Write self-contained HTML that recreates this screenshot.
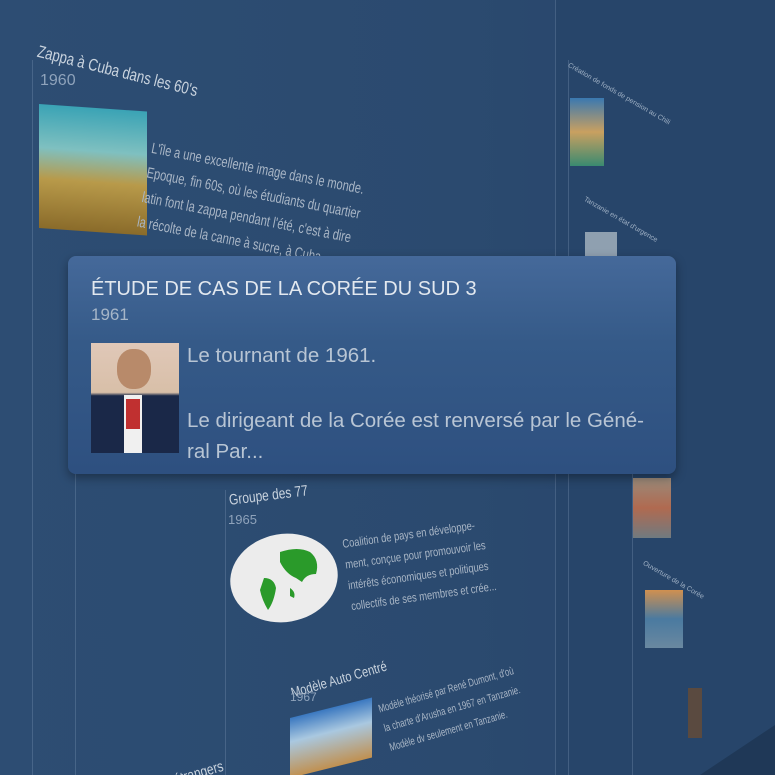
<!DOCTYPE html>
<html><head><meta charset="utf-8"><style>
*{margin:0;padding:0;box-sizing:border-box}
html,body{width:775px;height:775px;overflow:hidden}
body{background:#2b4a6f;font-family:"Liberation Sans",sans-serif;position:relative}
.a{position:absolute;color:#c9d3de;white-space:nowrap;transform-origin:0 0}
.ln{position:absolute;width:1px;background:rgba(150,175,205,.25)}
.img{position:absolute;transform-origin:0 0}
</style></head><body>
<div style="position:absolute;left:0;top:0;width:775px;height:775px;background:linear-gradient(90deg,#2d4d73 0%,#2b4a6f 60%,#26436a 100%)"></div>
<div style="position:absolute;left:555px;top:0;width:220px;height:775px;background:#27456a"></div>
<div class="ln" style="left:32px;top:60px;height:715px"></div>
<div class="ln" style="left:75px;top:470px;height:305px"></div>
<div class="ln" style="left:225px;top:490px;height:285px"></div>
<div class="ln" style="left:555px;top:0;height:775px"></div>
<div class="ln" style="left:568px;top:60px;height:715px"></div>
<div class="ln" style="left:632px;top:470px;height:305px"></div>
<svg style="position:absolute;left:0;top:0" width="775" height="775"><polygon points="775,725 700,775 775,775" fill="#1f3857"/></svg>

<div class="a" style="left:40px;top:42px;font-size:17px;transform:rotate(14deg) scaleX(.78)">Zappa à Cuba dans les 60's</div>
<div class="a" style="left:40px;top:72px;font-size:16px;color:#8fa3bb">1960</div>
<div class="img" style="left:39px;top:104px;width:108px;height:124px;background:linear-gradient(180deg,#3aa3b5 0%,#7fc0c0 35%,#b89a4a 60%,#8a6b2a 100%);transform:skewY(4deg)"></div>
<div class="a" style="left:154px;top:136px;font-size:15px;line-height:25px;color:#a9b6c6;transform:rotate(11deg) scaleX(.74)">L'île a une excellente image dans le monde.<br>Epoque, fin 60s, où les étudiants du quartier<br>latin font la zappa pendant l'été, c'est à dire<br>la récolte de la canne à sucre, à Cuba...</div>

<div class="a" style="left:570px;top:62px;font-size:7px;color:#9fb0c4;transform:rotate(30deg)">Création de fonds de pension au Chili</div>
<div class="img" style="left:570px;top:98px;width:34px;height:68px;background:linear-gradient(#3a78b0,#c9a060,#3a8a70)"></div>
<div class="a" style="left:586px;top:196px;font-size:7px;color:#9fb0c4;transform:rotate(30deg)">Tanzanie en état d'urgence</div>
<div class="img" style="left:585px;top:232px;width:32px;height:30px;background:#8fa0b0"></div>
<div class="a" style="left:645px;top:448px;font-size:7px;color:#9fb0c4">Corée</div>
<div class="img" style="left:633px;top:478px;width:38px;height:60px;background:linear-gradient(#9a8a7a,#b06a50,#707a80)"></div>
<div class="a" style="left:645px;top:560px;font-size:7px;color:#9fb0c4;transform:rotate(30deg)">Ouverture de la Corée</div>
<div class="img" style="left:645px;top:590px;width:38px;height:58px;background:linear-gradient(#d09050,#4a7aa0,#6a88a0)"></div>
<div class="img" style="left:688px;top:688px;width:14px;height:50px;background:#5a4a40"></div>

<div class="a" style="left:228px;top:492px;font-size:15px;transform:rotate(-7deg) scaleX(.8)">Groupe des 77</div>
<div class="a" style="left:228px;top:512px;font-size:13px;color:#8fa3bb">1965</div>
<svg style="position:absolute;left:228px;top:530px" width="112" height="100"><ellipse cx="56" cy="48" rx="54" ry="44" fill="#ececec" transform="rotate(-10 56 48)"/><path d="M52 22 q18-6 30 0 q10 8 6 22 q-10 0 -14 8 l-6-4 q-10 -4 -16 -16z M36 48 q10 0 12 10 q-2 14 -8 22 q-6 -10 -8 -20z M62 58 q6 4 4 10 l-4-2z" fill="#2a9a2a"/></svg>
<div class="a" style="left:341px;top:534px;font-size:12px;line-height:21px;color:#a9b6c6;transform:rotate(-8deg) scaleX(.78)">Coalition de pays en développe-<br>ment, conçue pour promouvoir les<br>intérêts économiques et politiques<br>collectifs de ses membres et crée...</div>

<div class="a" style="left:289px;top:685px;font-size:14px;transform:rotate(-16deg) scaleX(.8)">Modèle Auto Centré</div>
<div class="a" style="left:290px;top:690px;font-size:12px;color:#8fa3bb">1967</div>
<div class="img" style="left:290px;top:718px;width:82px;height:60px;background:linear-gradient(#3a78c0,#a9c8e0 40%,#c09050);transform:skewY(-14deg)"></div>
<div class="a" style="left:376px;top:700px;font-size:11px;line-height:20px;color:#a9b6c6;transform:rotate(-16deg) scaleX(.72)">Modèle théorisé par René Dumont, d'où<br>la charte d'Arusha en 1967 en Tanzanie.<br>Modèle dv seulement en Tanzanie.</div>
<div class="a" style="left:172px;top:772px;font-size:15px;transform:rotate(-16deg) scaleX(.8)">étrangers</div>

<div style="position:absolute;left:68px;top:256px;width:608px;height:218px;border-radius:8px;background:linear-gradient(180deg,#45699a 0%,#355a88 40%,#2e5080 100%);box-shadow:0 4px 10px rgba(0,0,0,.35)"></div>
<div class="a" style="left:91px;top:278px;font-size:20px;color:#e2e8ef">ÉTUDE DE CAS DE LA CORÉE DU SUD 3</div>
<div class="a" style="left:91px;top:305px;font-size:17px;color:#a6b6c8">1961</div>
<div style="position:absolute;left:91px;top:343px;width:88px;height:110px;background:linear-gradient(#e0c8b8,#d8bfa8 45%,#1a2848 48%,#1a2848)"><div style="position:absolute;left:26px;top:6px;width:34px;height:40px;border-radius:45%;background:#b88a6a"></div><div style="position:absolute;left:33px;top:52px;width:18px;height:58px;background:#f0f0f0"></div><div style="position:absolute;left:35px;top:56px;width:14px;height:30px;background:#c03030"></div></div>
<div class="a" style="left:187px;top:344px;font-size:20.5px;color:#b8c5d4">Le tournant de 1961.</div>
<div class="a" style="left:187px;top:405px;font-size:20.5px;line-height:31px;color:#b8c5d4">Le dirigeant de la Corée est renversé par le Géné-<br>ral Par...</div>
</body></html>
